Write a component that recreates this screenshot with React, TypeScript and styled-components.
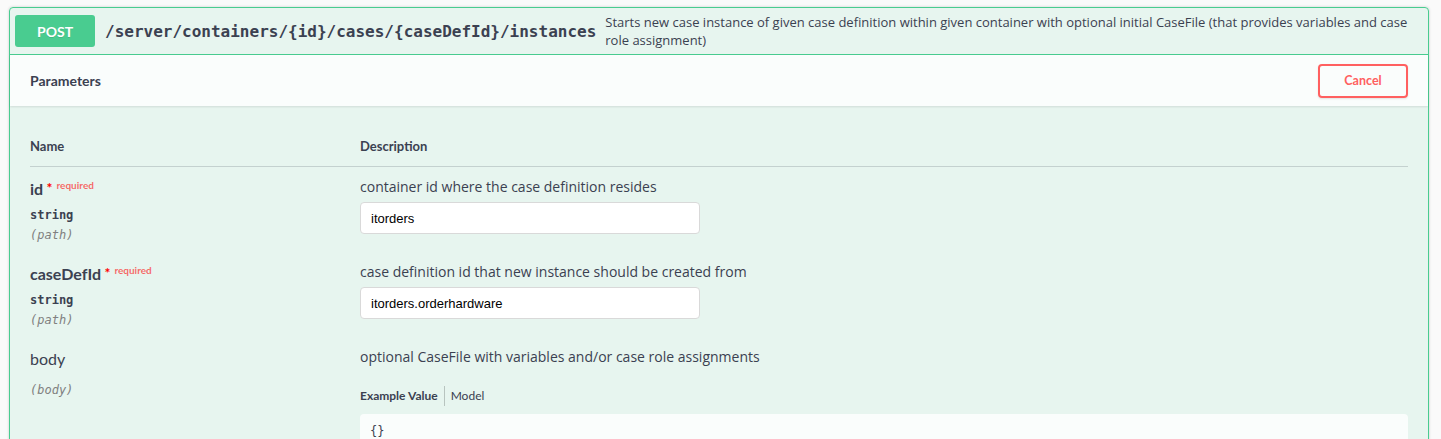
import React from 'react';
import styled, { createGlobalStyle } from 'styled-components';

const GlobalStyle = createGlobalStyle`
  html, body {
    margin: 0;
    padding: 0;
    background: #fafafa;
    overflow: hidden;
  }
  * {
    box-sizing: border-box;
  }
`;

const params = [
  {
    name: 'id',
    required: true,
    type: 'string',
    location: 'path',
    description: 'container id where the case definition resides',
    value: 'itorders',
  },
  {
    name: 'caseDefId',
    required: true,
    type: 'string',
    location: 'path',
    description: 'case definition id that new instance should be created from',
    value: 'itorders.orderhardware',
  },
];

const App = () => {
  return (
    <Page>
      <GlobalStyle />
      <OpBlock>
        <Summary>
          <Method>POST</Method>
          <Path>/server/containers/{'{id}'}/cases/{'{caseDefId}'}/instances</Path>
          <SummaryDescription>
            Starts new case instance of given case definition within given container with optional
            initial CaseFile (that provides variables and case role assignment)
          </SummaryDescription>
        </Summary>
        <SectionHeader>
          <SectionTitle>Parameters</SectionTitle>
          <CancelButton>Cancel</CancelButton>
        </SectionHeader>
        <TableWrap>
          <HeadRow>
            <HeadCell>Name</HeadCell>
            <HeadCell>Description</HeadCell>
          </HeadRow>
          {params.map((p) => (
            <ParamRow key={p.name}>
              <NameCol>
                <ParamName $required={p.required}>
                  {p.name}
                  <Star>&nbsp;*</Star>
                  <Required>required</Required>
                </ParamName>
                <ParamType>{p.type}</ParamType>
                <ParamIn>({p.location})</ParamIn>
              </NameCol>
              <DescCol>
                <Markdown>{p.description}</Markdown>
                <TextInput readOnly value={p.value} />
              </DescCol>
            </ParamRow>
          ))}
          <ParamRow>
            <NameCol>
              <ParamName>body</ParamName>
              <ParamIn $gap={13}>(body)</ParamIn>
            </NameCol>
            <DescCol>
              <Markdown>optional CaseFile with variables and/or case role assignments</Markdown>
              <Tabs>
                <Tab $active>Example Value</Tab>
                <Tab>Model</Tab>
              </Tabs>
              <BodyText readOnly value="{}" />
            </DescCol>
          </ParamRow>
        </TableWrap>
      </OpBlock>
    </Page>
  );
};

export default App;

const Page = styled.div`
  padding: 7px 12px 0 9px;
  font-family: 'Open Sans', sans-serif;
  color: #3b4151;
`;

const OpBlock = styled.div`
  border: 1px solid #49cc90;
  border-radius: 4px;
  background: rgba(73, 204, 144, 0.1);
  box-shadow: 0 0 3px rgba(0, 0, 0, 0.19);
`;

const Summary = styled.div`
  display: flex;
  align-items: center;
  padding: 5px;
  border-bottom: 1px solid #49cc90;
`;

const Method = styled.div`
  flex: none;
  width: 80px;
  height: 32px;
  display: flex;
  align-items: center;
  justify-content: center;
  border-radius: 3px;
  background: #49cc90;
  color: #fff;
  font-family: Lato, sans-serif;
  font-size: 14px;
  font-weight: 700;
  text-shadow: 0 1px 0 rgba(0, 0, 0, 0.1);
`;

const Path = styled.span`
  flex: none;
  padding: 0 9px 0 10px;
  font-family: 'DejaVu Sans Mono', monospace;
  font-size: 16px;
  font-weight: 600;
  color: #3b4151;
`;

const SummaryDescription = styled.div`
  flex: 1;
  font-size: 13px;
  line-height: 18px;
  color: #3b4151;
`;

const SectionHeader = styled.div`
  display: flex;
  align-items: center;
  justify-content: space-between;
  min-height: 51px;
  padding: 8px 20px;
  background: rgba(255, 255, 255, 0.8);
  box-shadow: 0 1px 2px rgba(0, 0, 0, 0.1);
`;

const SectionTitle = styled.h4`
  margin: 0;
  font-family: Lato, sans-serif;
  font-size: 14px;
  font-weight: 700;
`;

const CancelButton = styled.button`
  width: 90px;
  height: 34px;
  border: 2px solid #ff6060;
  border-radius: 4px;
  background: transparent;
  color: #ff6060;
  font-family: Lato, sans-serif;
  font-size: 12.5px;
  font-weight: 700;
  box-shadow: 0 1px 2px rgba(0, 0, 0, 0.1);
`;

const TableWrap = styled.div`
  padding: 20px 20px 0;
`;

const HeadRow = styled.div`
  display: grid;
  grid-template-columns: 330px 1fr;
  padding: 12px 0;
  border-bottom: 1px solid rgba(59, 65, 81, 0.2);
`;

const HeadCell = styled.div`
  font-family: Lato, sans-serif;
  font-size: 13px;
  font-weight: 700;
  line-height: 16px;
`;

const ParamRow = styled.div`
  display: grid;
  grid-template-columns: 330px 1fr;
  padding: 10px 0 0;
  min-height: 85px;
`;

const NameCol = styled.div`
  display: flex;
  flex-direction: column;
  padding-top: 2px;
`;

const ParamName = styled.div<{ $required?: boolean }>`
  display: flex;
  align-items: flex-start;
  font-family: Lato, sans-serif;
  font-size: 16px;
  line-height: 20px;
  font-weight: ${(p) => (p.$required ? 700 : 400)};
`;

const Star = styled.span`
  color: #f00;
  font-size: 14px;
  line-height: 18px;
`;

const Required = styled.span`
  margin-left: 4px;
  margin-top: -1px;
  font-size: 10px;
  line-height: 14px;
  font-weight: 700;
  color: rgba(255, 0, 0, 0.6);
`;

const ParamType = styled.div`
  margin-top: 8px;
  font-family: 'DejaVu Sans Mono', monospace;
  font-size: 12px;
  font-weight: 600;
  line-height: 16px;
`;

const ParamIn = styled.div<{ $gap?: number }>`
  margin-top: ${(p) => p.$gap ?? 4}px;
  font-family: 'DejaVu Sans Mono', monospace;
  font-size: 12px;
  font-style: italic;
  line-height: 16px;
  color: #808080;
`;

const DescCol = styled.div`
  display: flex;
  flex-direction: column;
  align-items: flex-start;
`;

const Markdown = styled.p`
  margin: 0;
  font-size: 14px;
  line-height: 20px;
  color: #3b4151;
`;

const TextInput = styled.input`
  margin-top: 5px;
  width: 340px;
  height: 32px;
  padding: 8px 10px;
  border: 1px solid #d9d9d9;
  border-radius: 4px;
  background: #fff;
  font-family: 'Liberation Sans', Arial, sans-serif;
  font-size: 13px;
  color: #000;
  outline: none;
`;

const Tabs = styled.div`
  display: flex;
  align-items: center;
  margin-top: 19px;
`;

const Tab = styled.div<{ $active?: boolean }>`
  font-family: Lato, sans-serif;
  font-size: 12px;
  line-height: 20px;
  font-weight: ${(p) => (p.$active ? 700 : 400)};
  color: #3b4151;
  padding: 0 6px;
  &:first-child {
    padding-left: 0;
  }
  & + & {
    border-left: 1px solid rgba(0, 0, 0, 0.2);
  }
`;

const BodyText = styled.textarea`
  margin-top: 8px;
  width: 100%;
  min-height: 200px;
  padding: 10px;
  border: none;
  border-radius: 4px;
  background: rgba(255, 255, 255, 0.8);
  font-family: 'DejaVu Sans Mono', monospace;
  font-size: 12px;
  color: #3b4151;
  resize: none;
  outline: none;
`;
